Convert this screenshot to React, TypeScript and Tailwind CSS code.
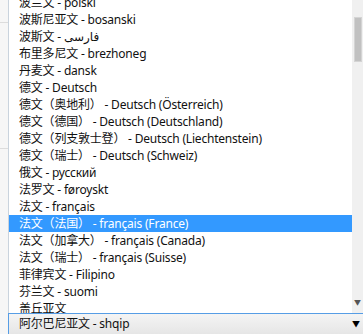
const items = [
  "波兰文 - polski",
  "波斯尼亚文 - bosanski",
  "波斯文 - فارسی",
  "布里多尼文 - brezhoneg",
  "丹麦文 - dansk",
  "德文 - Deutsch",
  "德文（奥地利） - Deutsch (Österreich)",
  "德文（德国） - Deutsch (Deutschland)",
  "德文（列支敦士登） - Deutsch (Liechtenstein)",
  "德文（瑞士） - Deutsch (Schweiz)",
  "俄文 - русский",
  "法罗文 - føroyskt",
  "法文 - français",
  "法文（法国） - français (France)",
  "法文（加拿大） - français (Canada)",
  "法文（瑞士） - français (Suisse)",
  "菲律宾文 - Filipino",
  "芬兰文 - suomi",
  "盖丘亚文",
];

const selected = 13;

export default function App() {
  return (
    <div
      className="flex flex-col w-[363px] h-[334px] overflow-hidden bg-white text-[12px] tracking-[-0.2px] text-[#111]"
      style={{ fontFamily: '"Noto Sans", "Noto Sans CJK SC", "DejaVu Sans", sans-serif' }}
    >
      <div className="flex h-[313px]">
        {/* page behind the popup */}
        <div className="w-[8px] bg-[#f6f6f6] flex flex-col">
          <div className="h-[22px]" />
          <div className="h-px bg-[#dcdcdc]" />
          <div className="h-[125px]" />
          <div className="h-px bg-[#dcdcdc]" />
        </div>
        <div className="flex-1 border-l border-[#c9d3dd] overflow-hidden">
          <div className="-mt-[6px]">
            {items.map((item, i) => (
              <div
                key={i}
                className={`h-[17px] leading-[17px] pl-[10px] whitespace-nowrap ${
                  i === selected ? "bg-[#3399ff] text-white" : ""
                }`}
              >
                {item}
              </div>
            ))}
          </div>
        </div>
        {/* scrollbar */}
        <div className="w-[11px] bg-[#f0f0f0] flex flex-col items-center">
          <div className="mt-[17px] w-[8px] h-[45px] bg-[#c1c1c1] border border-[#d4d4d4]" />
          <div className="flex-1" />
          <div className="mb-[7px] text-[7px] leading-none text-[#555]">▼</div>
        </div>
      </div>
      {/* select box */}
      <div className="flex h-[21px]">
        <div className="w-[8px] bg-[#f6f6f6]" />
        <div className="flex-1 flex items-center border-t border-l border-[#569de5] bg-gradient-to-b from-[#f4f4f4] to-[#e6e6e6] pl-[10px]">
          <span className="flex-1">阿尔巴尼亚文 - shqip</span>
          <span className="w-[11px] text-[8px] leading-none text-black">▼</span>
        </div>
      </div>
    </div>
  );
}
